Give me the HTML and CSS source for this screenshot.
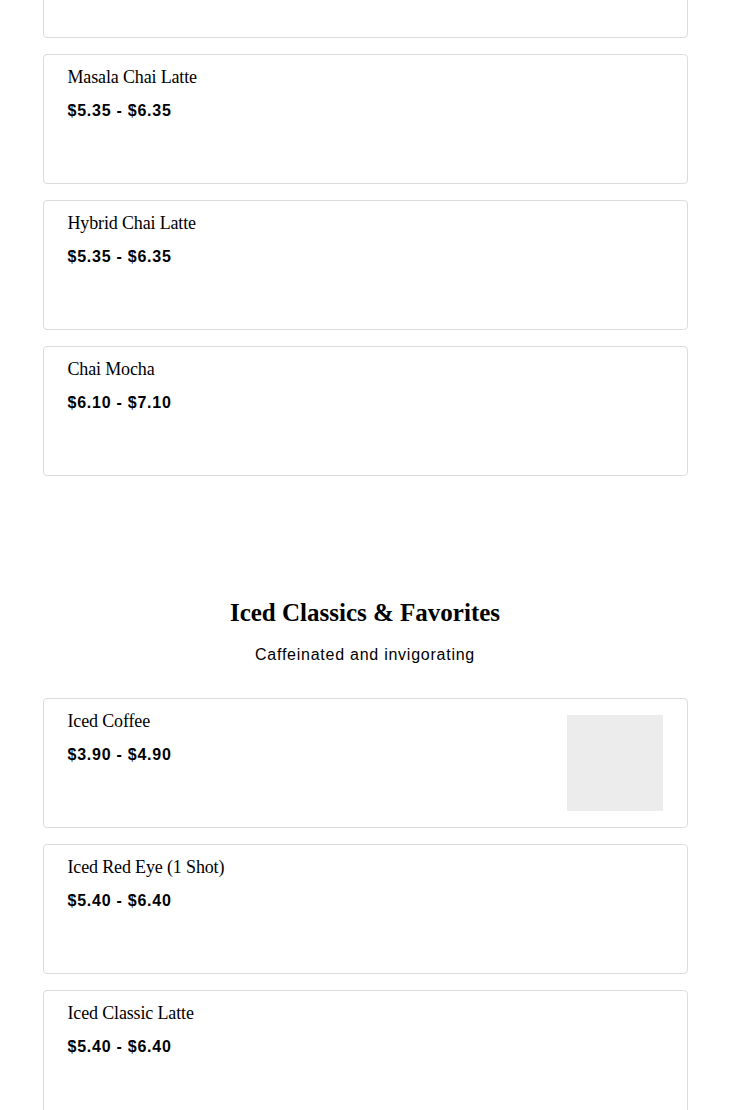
FILE: index.html
```html
<!DOCTYPE html>
<html>
<head>
<meta charset="utf-8">
<link rel="stylesheet" href="styles.css">
</head>
<body>
<main class="menu">
  <section class="section section-first">
    <div class="items">
      <article class="item item-cut" aria-hidden="true"></article>
      <article class="item"><div class="item-text"><h3 class="item-name">Masala Chai Latte</h3><p class="item-price">$5.35 - $6.35</p></div></article>
      <article class="item"><div class="item-text"><h3 class="item-name">Hybrid Chai Latte</h3><p class="item-price">$5.35 - $6.35</p></div></article>
      <article class="item"><div class="item-text"><h3 class="item-name">Chai Mocha</h3><p class="item-price">$6.10 - $7.10</p></div></article>
    </div>
  </section>
  <section class="section">
    <header class="section-head">
      <h2 class="section-title">Iced Classics &amp; Favorites</h2>
      <p class="section-sub">Caffeinated and invigorating</p>
    </header>
    <div class="items">
      <article class="item"><div class="item-text"><h3 class="item-name">Iced Coffee</h3><p class="item-price">$3.90 - $4.90</p></div><div class="item-thumb"></div></article>
      <article class="item"><div class="item-text"><h3 class="item-name">Iced Red Eye (1 Shot)</h3><p class="item-price">$5.40 - $6.40</p></div></article>
      <article class="item"><div class="item-text"><h3 class="item-name">Iced Classic Latte</h3><p class="item-price">$5.40 - $6.40</p></div></article>
    </div>
  </section>
</main>
</body>
</html>
```
FILE: styles.css
```css
html, body {
  margin: 0;
  padding: 0;
  background: #fff;
  color: #000;
}
.menu {
  width: 645px;
  margin: -92px auto 0;
}
.section-first {
  padding-bottom: 122px;
}
.items {
  display: flex;
  flex-direction: column;
  gap: 16px;
}
.item {
  display: flex;
  justify-content: space-between;
  min-height: 100px;
  padding: 12px 24px 16px;
  border: 1px solid #dcdcdc;
  border-radius: 4px;
}
.item-text {
  display: flex;
  flex-direction: column;
}
.item-name {
  margin: 0;
  font-family: "Liberation Serif", serif;
  font-weight: normal;
  font-size: 18px;
  line-height: 20px;
  letter-spacing: -0.15px;
}
.item-price {
  margin: 14px 0 0;
  font-family: "Liberation Sans", Arial, sans-serif;
  font-weight: bold;
  font-size: 16px;
  line-height: 20px;
  letter-spacing: 0.75px;
}
.item-thumb {
  width: 96px;
  height: 96px;
  margin-top: 4px;
  background: #ececec;
  flex-shrink: 0;
}
.section-head {
  text-align: center;
  margin-bottom: 33px;
}
.section-title {
  margin: 0;
  font-family: "Liberation Serif", serif;
  font-weight: bold;
  font-size: 25px;
  line-height: 30px;
}
.section-sub {
  margin: 17px 0 0;
  font-family: "Liberation Sans", Arial, sans-serif;
  font-size: 16px;
  line-height: 20px;
  letter-spacing: 0.75px;
}
```
